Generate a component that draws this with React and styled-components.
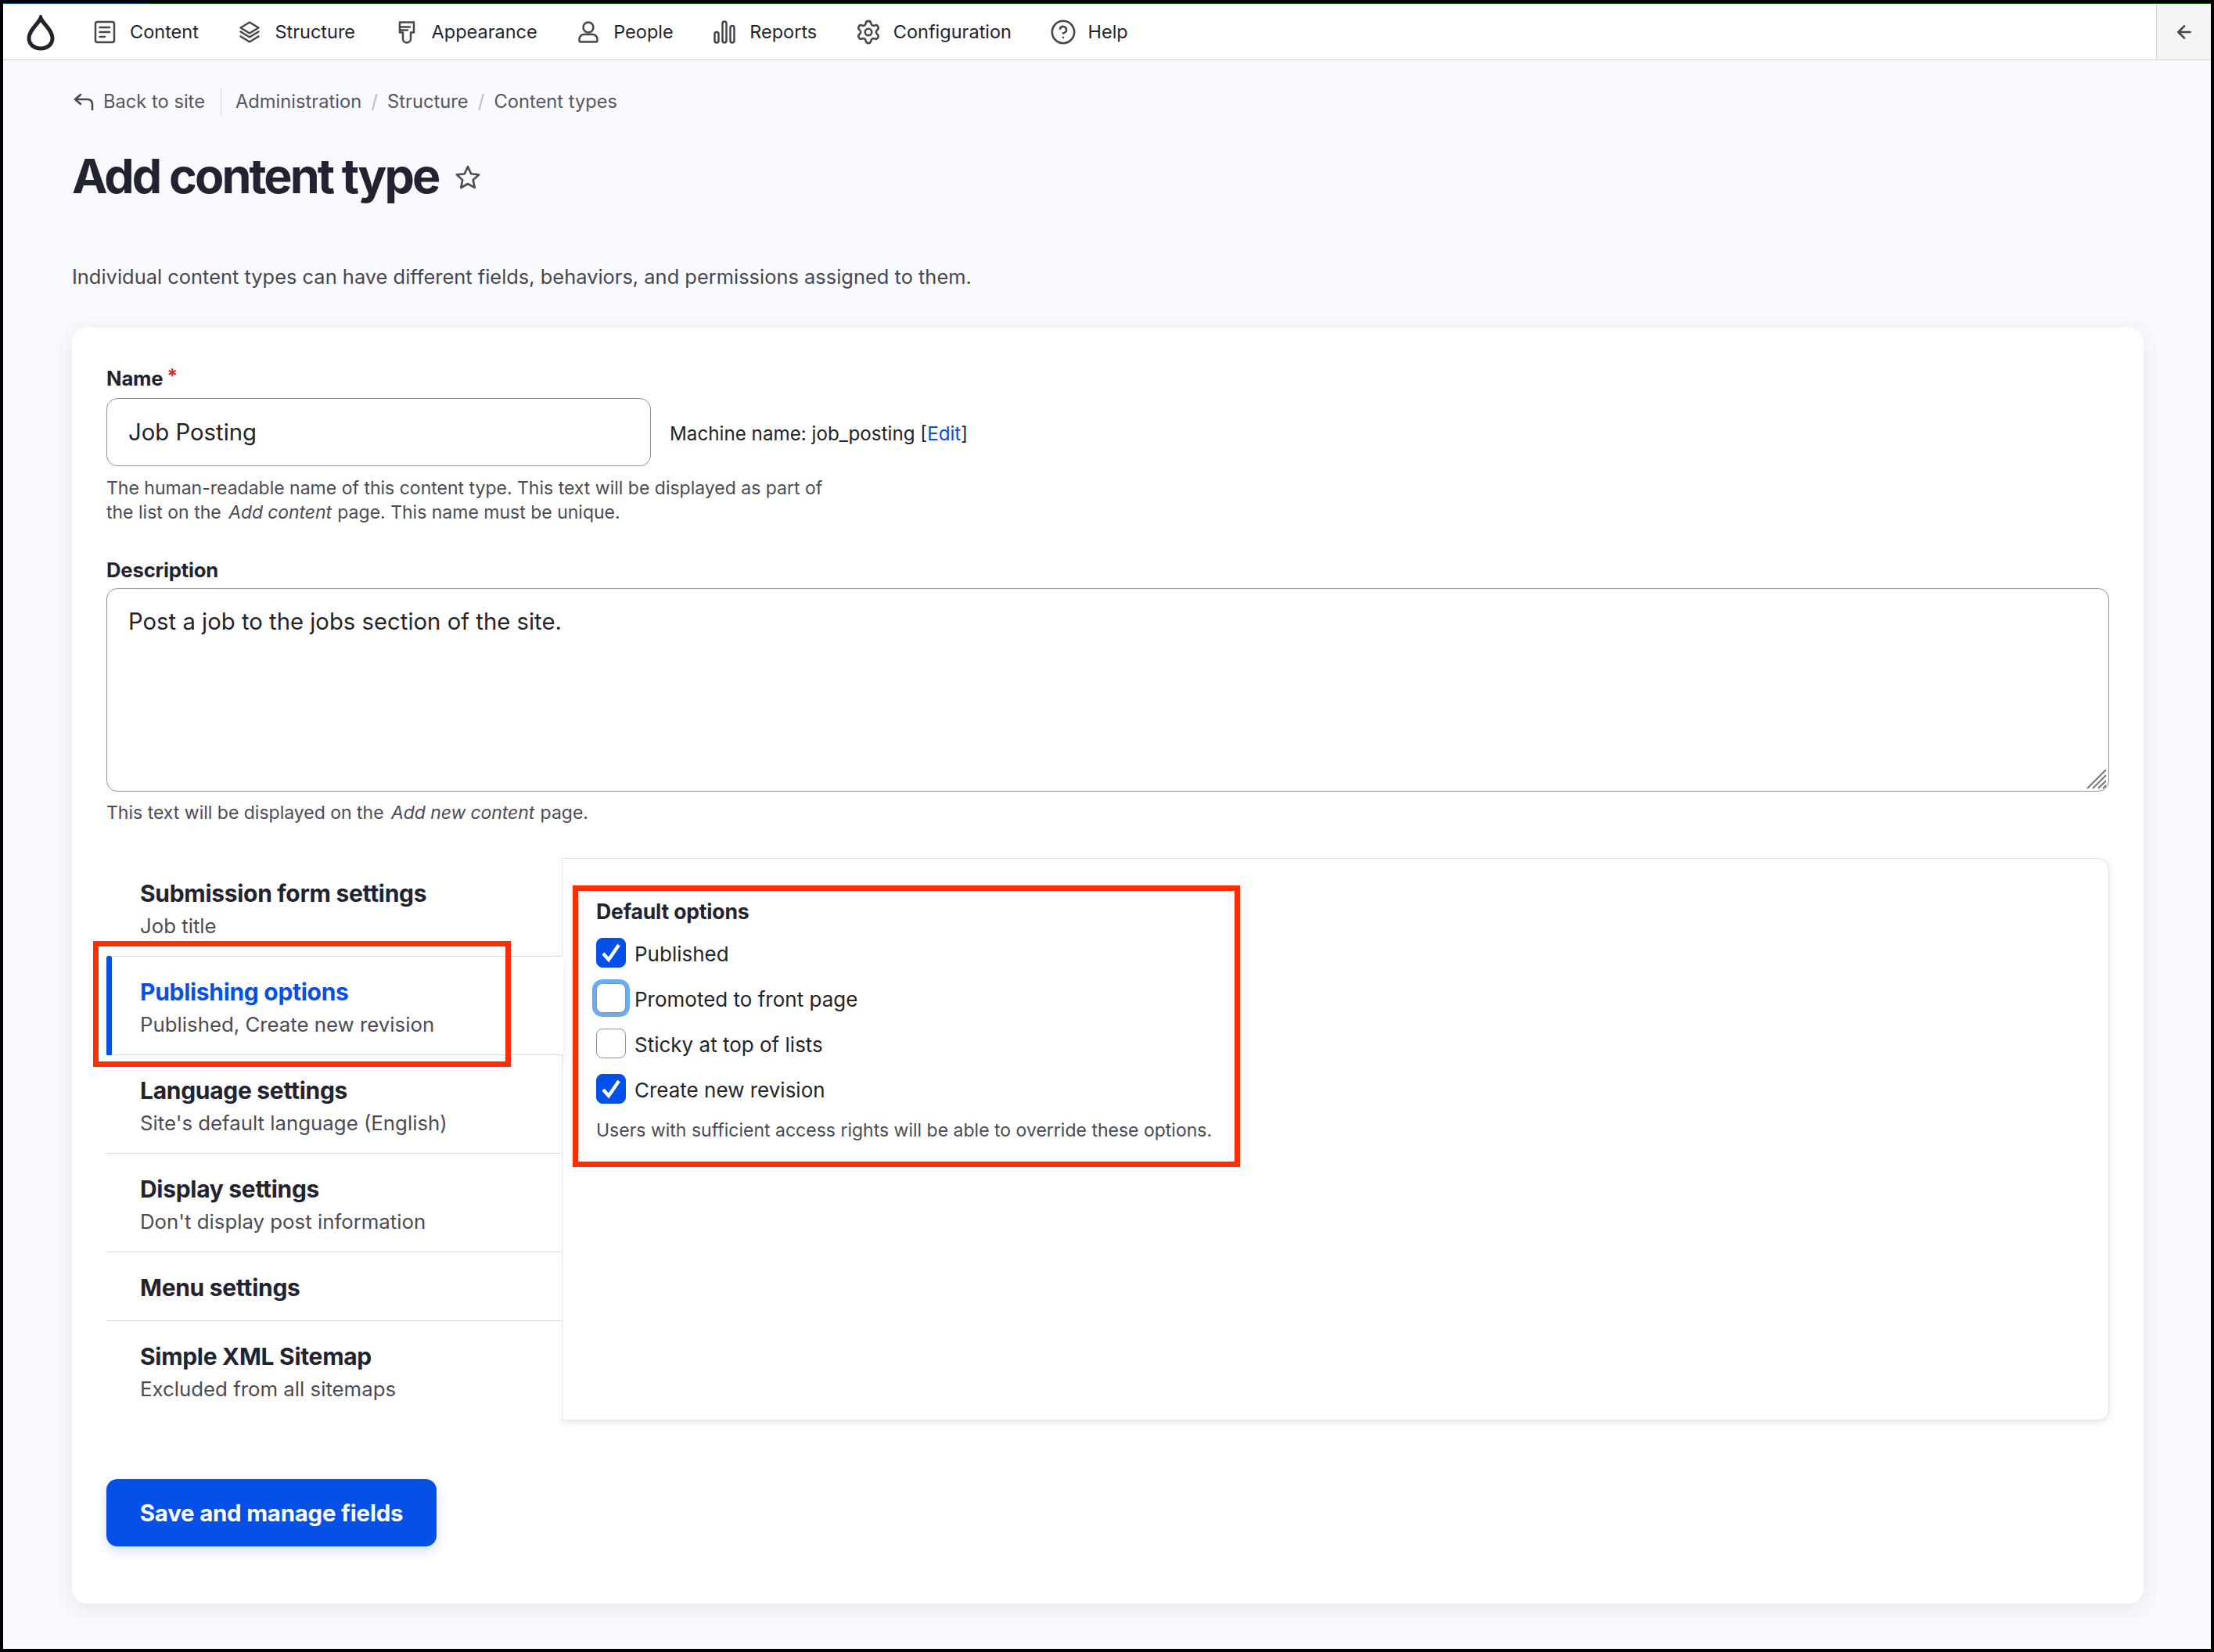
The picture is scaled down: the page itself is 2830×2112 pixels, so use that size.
import React from "react";
import styled, { createGlobalStyle } from "styled-components";
import { ArrowLeft, Settings, CircleHelp } from "lucide-react";

const Global = createGlobalStyle`
  html, body { margin: 0; padding: 0; background: #000; }
  * { box-sizing: border-box; }
  body { font-family: Inter, "Liberation Sans", sans-serif; color: #222330; }
`;

const Frame = styled.div`
  position: relative;
  width: 2830px;
  height: 2112px;
  padding: 4px;
  background: #000;
  overflow: hidden;
`;
const Screen = styled.div`
  height: 100%;
  background: #f9faff;
  display: flex;
  flex-direction: column;
`;
const LoadLine = styled.div`
  height: 1px;
  flex: none;
  background: linear-gradient(to right, #0550e6 186px, #0a640a 186px);
`;
const Toolbar = styled.header`
  height: 72px;
  flex: none;
  display: flex;
  align-items: center;
  background: #fff;
  border-bottom: 1.5px solid #d4d4d8;
  padding-left: 30px;
`;
const Logo = styled.svg`
  width: 36px;
  height: 46px;
  flex: none;
  margin-right: 50px;
  margin-top: 2px;
`;
const NavList = styled.nav`
  display: flex;
  align-items: center;
  gap: 51.5px;
  flex: 1;
`;
const NavItem = styled.a`
  display: flex;
  align-items: center;
  gap: 18px;
  font-size: 23.5px;
  line-height: 30px;
  color: #22232c;
`;
const NavIcon = styled.svg`
  width: 28px;
  height: 30px;
  flex: none;
  color: #45464e;
`;
const GearIcon = styled(Settings)`
  width: 34px;
  height: 34px;
  margin: -2px -3px;
  flex: none;
  color: #45464e;
`;
const HelpIcon = styled(CircleHelp)`
  width: 34px;
  height: 34px;
  margin: -2px -3px;
  flex: none;
  color: #45464e;
`;
const Collapse = styled.button`
  width: 70px;
  height: 100%;
  flex: none;
  border: 0;
  border-left: 1.5px solid #d4d4d8;
  background: #f4f4f4;
  color: #45464e;
  padding: 0 0 0 1px;
  display: flex;
  align-items: center;
  justify-content: center;
`;
const Main = styled.main`
  flex: 1;
  padding: 35px 86px 0 88px;
`;
const Crumbs = styled.div`
  display: flex;
  align-items: center;
  height: 35px;
  font-size: 23.7px;
  color: #55565f;
`;
const BackLink = styled.a`
  display: flex;
  align-items: center;
  gap: 12px;
  padding-right: 20px;
  height: 100%;
  border-right: 1.5px solid #d4d4d8;
  margin-right: 18px;
  margin-left: 2px;
`;
const CrumbSep = styled.span`
  color: #b9bac2;
  margin: 0 12.2px;
`;
const TitleRow = styled.div`
  display: flex;
  align-items: center;
  gap: 21px;
  margin-top: 41px;
  height: 75px;
`;
const Title = styled.h1`
  margin: 0;
  font-size: 61px;
  line-height: 75px;
  font-weight: 700;
  letter-spacing: -2.9px;
  color: #222330;
`;
const Intro = styled.p`
  margin: 73px 0 0;
  font-size: 25.45px;
  line-height: 36px;
  color: #45464e;
`;
const Card = styled.section`
  margin-top: 47px;
  background: #fff;
  border-radius: 20px;
  padding: 48px 44px 73px;
  box-shadow: 0 6px 24px rgba(40, 50, 90, 0.1);
`;
const Label = styled.div`
  font-size: 25.7px;
  line-height: 34px;
  font-weight: 700;
  color: #222330;
  letter-spacing: -0.2px;
  margin-top: ${(p) => p.$top || 0}px;
  margin-bottom: ${(p) => p.$bottom || 8}px;
`;
const Required = styled.span`
  display: inline-block;
  color: #d72a2a;
  font-size: 25px;
  line-height: 0;
  margin-left: 5px;
  font-weight: 600;
  transform: translateY(-3px);
`;
const NameRow = styled.div`
  display: flex;
  align-items: center;
  gap: 24px;
`;
const Field = styled.div`
  border: 1.5px solid #8e8f99;
  border-radius: 14px;
  background: #fff;
  font-size: 29.3px;
  color: #232429;
  padding-left: 27px;
`;
const NameInput = styled(Field)`
  width: 696px;
  height: 87px;
  line-height: 86px;
`;
const Machine = styled.div`
  font-size: 24.2px;
  line-height: 34px;
  color: #232429;
  margin-top: 5px;
`;
const BlueLink = styled.a`
  color: #0550e6;
`;
const Help = styled.div`
  font-size: 23px;
  line-height: 31px;
  color: #4a4b55;
  margin-top: ${(p) => p.$top}px;
`;
const Emphasis = styled.em`
  margin: 0 1px 0 3px;
  letter-spacing: -0.1px;
`;
const TextArea = styled(Field)`
  position: relative;
  height: 260px;
  line-height: 36px;
  padding-top: 24px;
`;
const Grip = styled.svg`
  position: absolute;
  right: 2px;
  bottom: 2px;
  width: 26px;
  height: 26px;
`;
const Tabs = styled.div`
  margin-top: 42px;
  display: grid;
  grid-template-columns: 582px 1fr;
`;
const Menu = styled.div`
  position: relative;
  z-index: 1;
`;
const MenuItem = styled.div`
  position: relative;
  padding: ${(p) => (p.$compact ? "24.5px 0 21.5px 43px" : "24.5px 0 20.5px 43px")};
  background: #fff;
  border-bottom: ${(p) => (p.$last ? "0" : "1.5px solid #dcdde2")};
  ${(p) =>
    p.$active &&
    `
    margin-right: -2px;
    box-shadow: 0 6px 14px rgba(40, 50, 90, 0.1);
  `}
`;
const ActiveBar = styled.span`
  position: absolute;
  left: 0;
  top: -1px;
  bottom: -2px;
  width: 7px;
  background: #0550e6;
  border-radius: 3px;
`;
const MenuTitle = styled.div`
  font-size: 30px;
  line-height: 41px;
  font-weight: 700;
  letter-spacing: -0.3px;
  color: ${(p) => (p.$active ? "#0550e6" : "#222330")};
`;
const MenuSub = styled.div`
  font-size: 25.8px;
  line-height: 36px;
  margin-top: 3px;
  color: #4a4b55;
`;
const Pane = styled.div`
  height: 719px;
  background: #fff;
  border: 1.5px solid #e3e4e9;
  border-radius: 0 14px 14px 0;
  padding: 50px 43px 0;
  box-shadow: 0 3px 10px rgba(40, 50, 90, 0.12);
`;
const PaneLabel = styled(Label)`
  font-size: 26.6px;
`;
const Checks = styled.div`
  display: flex;
  flex-direction: column;
  gap: 20px;
`;
const CheckRow = styled.label`
  display: flex;
  align-items: center;
  gap: 11px;
  height: 38px;
  font-size: 26px;
  color: #232429;
`;
const CheckText = styled.span`
  margin-top: 2px;
`;
const CheckBox = styled.span`
  width: 38px;
  height: 38px;
  flex: none;
  border-radius: 8px;
  display: flex;
  align-items: center;
  justify-content: center;
  background: ${(p) => (p.$on ? "#0550e6" : "#fff")};
  border: 1.5px solid ${(p) => (p.$on ? "#0550e6" : "#8e8f99")};
  ${(p) => p.$focus && "box-shadow: 0 0 0 5px #66adf7;"}
`;
const Submit = styled.button`
  display: block;
  margin-top: 75px;
  width: 422px;
  height: 86px;
  border: 0;
  border-radius: 14px;
  background: #0550e6;
  color: #fff;
  font-family: inherit;
  font-size: 29.4px;
  font-weight: 700;
  letter-spacing: -0.2px;
  box-shadow: 0 6px 16px rgba(5, 80, 230, 0.18);
`;
const Highlight = styled.div`
  position: absolute;
  left: ${(p) => p.$x}px;
  top: ${(p) => p.$y}px;
  width: ${(p) => p.$w}px;
  height: ${(p) => p.$h}px;
  border: 7px solid #ff2d00;
  z-index: 5;
`;

const Star = (
  <svg width="34" height="32" viewBox="0 0 34 32" fill="none" stroke="#4a4b55" strokeWidth="2.6" strokeLinejoin="round">
    <path d="M17 3l4.2 9.2 10 1.1-7.5 6.7 2.1 9.9L17 25l-8.8 5 2.1-9.9-7.5-6.7 10-1.1z" />
  </svg>
);

const BackArrow = (
  <svg width="26" height="22" viewBox="0 0 26 22" fill="none" stroke="#45464e" strokeWidth="2.6" strokeLinecap="round" strokeLinejoin="round">
    <path d="M9 2L2 8l7 6M2 8h16a6 6 0 0 1 6 6v7" />
  </svg>
);

const navPaths = {
  content: (
    <>
      <rect x="2" y="2" width="24" height="26" rx="2.5" />
      <path d="M7.5 9H20M7.5 15H20M7.5 21H14" />
    </>
  ),
  structure: (
    <>
      <path d="M14 2.5L25.5 9.5 14 16.5 2.5 9.5z" />
      <path d="M2.5 14.5L14 21.5l11.5-7M2.5 20.5L14 27.5l11.5-7" />
    </>
  ),
  appearance: (
    <>
      <path d="M5 2.5h18v13h-4v8a5 5 0 0 1-10 0v-8H5z" />
      <path d="M5 8.5h13M5 12.5h10" />
    </>
  ),
  people: (
    <>
      <circle cx="14" cy="9" r="6.5" />
      <path d="M2.5 26v-2a6 6 0 0 1 6-6h11a6 6 0 0 1 6 6v2a1.5 1.5 0 0 1-1.5 1.5H4A1.5 1.5 0 0 1 2.5 26z" />
    </>
  ),
  reports: (
    <>
      <rect x="1.5" y="15" width="5" height="13.5" rx="2.5" />
      <rect x="11.5" y="1.5" width="5" height="27" rx="2.5" />
      <rect x="21.5" y="7" width="5" height="21.5" rx="2.5" />
    </>
  ),
};

function Icon({ name }) {
  return (
    <NavIcon viewBox="0 0 28 30" fill="none" stroke="currentColor" strokeWidth="2.5" strokeLinecap="round" strokeLinejoin="round">
      {navPaths[name]}
    </NavIcon>
  );
}

const Tick = (
  <svg width="26" height="26" viewBox="0 0 26 26" fill="none" stroke="#fff" strokeWidth="4.4">
    <path d="M3 14l7 8L23 3" />
  </svg>
);

const tabs = [
  ["Submission form settings", "Job title"],
  ["Publishing options", "Published, Create new revision", true],
  ["Language settings", "Site's default language (English)"],
  ["Display settings", "Don't display post information"],
  ["Menu settings"],
  ["Simple XML Sitemap", "Excluded from all sitemaps"],
];

const options = [
  ["Published", true],
  ["Promoted to front page", false, true],
  ["Sticky at top of lists", false],
  ["Create new revision", true],
];

export default function App() {
  return (
    <Frame>
      <Global />
      <Screen>
        <LoadLine />
        <Toolbar>
          <Logo viewBox="0 0 36 46" fill="none" stroke="#22232c" strokeWidth="5">
            <path d="M18 4C21 12 33 19 33 30C33 38 26 43 18 43C10 43 3 38 3 30C3 19 15 12 18 4Z" />
          </Logo>
          <NavList>
            <NavItem><Icon name="content" />Content</NavItem>
            <NavItem><Icon name="structure" />Structure</NavItem>
            <NavItem><Icon name="appearance" />Appearance</NavItem>
            <NavItem><Icon name="people" />People</NavItem>
            <NavItem><Icon name="reports" />Reports</NavItem>
            <NavItem><GearIcon strokeWidth={1.8} />Configuration</NavItem>
            <NavItem><HelpIcon strokeWidth={1.8} />Help</NavItem>
          </NavList>
          <Collapse aria-label="Collapse"><ArrowLeft size={26} strokeWidth={2.4} /></Collapse>
        </Toolbar>
        <Main>
          <Crumbs>
            <BackLink>{BackArrow}Back to site</BackLink>
            <span>Administration</span>
            <CrumbSep>/</CrumbSep>
            <span>Structure</span>
            <CrumbSep>/</CrumbSep>
            <span>Content types</span>
          </Crumbs>
          <TitleRow>
            <Title>Add content type</Title>
            {Star}
          </TitleRow>
          <Intro>Individual content types can have different fields, behaviors, and permissions assigned to them.</Intro>
          <Card>
            <Label>Name<Required>*</Required></Label>
            <NameRow>
              <NameInput>Job Posting</NameInput>
              <Machine>Machine name: job_posting [<BlueLink>Edit</BlueLink>]</Machine>
            </NameRow>
            <Help $top={13}>
              The human-readable name of this content type. This text will be displayed as part of
              <br />
              the list on the <Emphasis>Add content</Emphasis> page. This name must be unique.
            </Help>
            <Label $top={41} $bottom={6}>Description</Label>
            <TextArea>
              Post a job to the jobs section of the site.
              <Grip viewBox="0 0 26 26" stroke="#777" strokeWidth="2">
                <path d="M1 25L25 1M8 25L25 8M15 25L25 15M21 25l4-4" />
              </Grip>
            </TextArea>
            <Help $top={12}>This text will be displayed on the <Emphasis>Add new content</Emphasis> page.</Help>
            <Tabs>
              <Menu>
                {tabs.map(([t, s, active], i) => (
                  <MenuItem key={t} $active={active} $compact={!s} $last={i === tabs.length - 1}>
                    {active && <ActiveBar />}
                    <MenuTitle $active={active}>{t}</MenuTitle>
                    {s && <MenuSub>{s}</MenuSub>}
                  </MenuItem>
                ))}
              </Menu>
              <Pane>
                <PaneLabel $bottom={17}>Default options</PaneLabel>
                <Checks>
                  {options.map(([t, on, focus]) => (
                    <CheckRow key={t}>
                      <CheckBox $on={on} $focus={focus}>{on && Tick}</CheckBox>
                      <CheckText>{t}</CheckText>
                    </CheckRow>
                  ))}
                </Checks>
                <Help $top={19}>Users with sufficient access rights will be able to override these options.</Help>
              </Pane>
            </Tabs>
            <Submit>Save and manage fields</Submit>
          </Card>
        </Main>
      </Screen>
      <Highlight $x={119} $y={1203} $w={534} $h={161} />
      <Highlight $x={732} $y={1132} $w={853} $h={360} />
    </Frame>
  );
}
